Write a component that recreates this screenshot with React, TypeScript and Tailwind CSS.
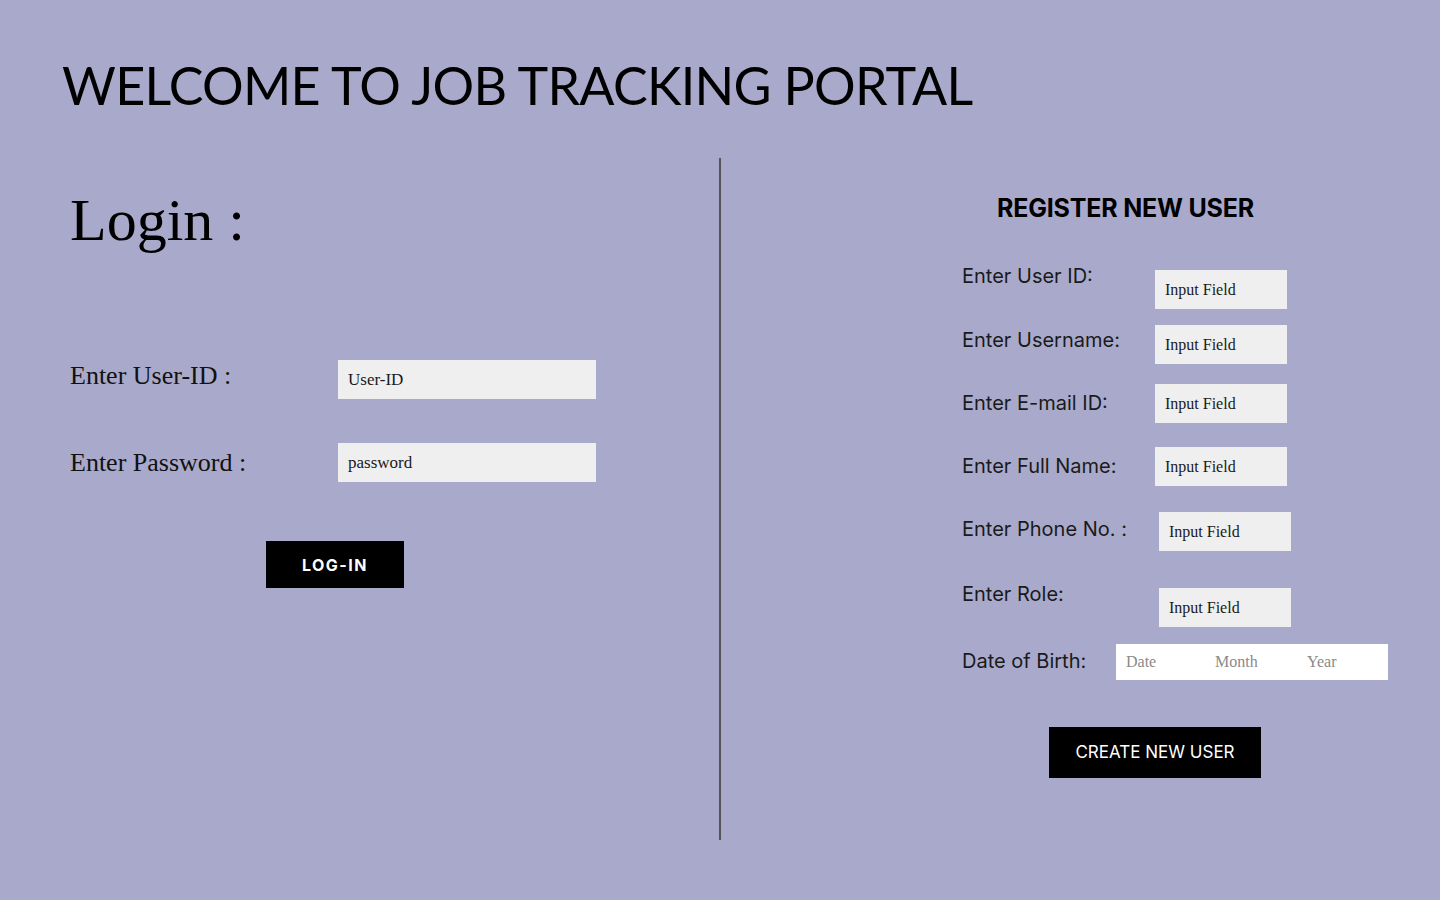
import { useState } from 'react';

type RegRow = {
  label: string;
  row: string;
  lab: string;
  inp: string;
};

const serif = "font-['Liberation_Serif',serif]";

const regRows: RegRow[] = [
  { label: 'Enter User ID:', row: 'mt-[43px]', lab: 'w-[193px] mt-0', inp: 'mt-[6px]' },
  { label: 'Enter Username:', row: 'mt-[16px]', lab: 'w-[193px] mt-[3px]', inp: 'mt-0' },
  { label: 'Enter E-mail ID:', row: 'mt-[20px]', lab: 'w-[193px] mt-[7px]', inp: 'mt-0' },
  { label: 'Enter Full Name:', row: 'mt-[24px]', lab: 'w-[193px] mt-[7px]', inp: 'mt-0' },
  { label: 'Enter Phone No. :', row: 'mt-[26px]', lab: 'w-[197px] mt-[5px]', inp: 'mt-0' },
  { label: 'Enter Role:', row: 'mt-[31px]', lab: 'w-[197px] mt-0', inp: 'mt-[6px]' },
];

function LoginPanel() {
  const [userId, setUserId] = useState('');
  const [password, setPassword] = useState('');

  return (
    <div className="w-[719px] pl-[70px] pt-[32px]">
      <h2 className={`${serif} text-[60px] leading-none text-black`}>Login :</h2>

      <div className="mt-[110px] flex h-[39px] items-center">
        <label className={`${serif} mb-[8px] w-[268px] text-[26px] leading-[39px] text-[#111]`}>
          Enter User-ID :
        </label>
        <input
          value={userId}
          onChange={(e) => setUserId(e.target.value)}
          placeholder="User-ID"
          className={`${serif} h-[39px] w-[258px] bg-[#efefef] pl-[10px] text-[17px] text-[#111] outline-none placeholder:text-[#1a1a1a]`}
        />
      </div>

      <div className="mt-[44px] flex h-[39px] items-center">
        <label className={`${serif} w-[268px] text-[26px] leading-[39px] text-[#111]`}>
          Enter Password :
        </label>
        <input
          type="password"
          value={password}
          onChange={(e) => setPassword(e.target.value)}
          placeholder="password"
          className={`${serif} h-[39px] w-[258px] bg-[#efefef] pl-[10px] text-[17px] text-[#111] outline-none placeholder:text-[#1a1a1a]`}
        />
      </div>

      <button className="ml-[196px] mt-[59px] flex h-[47px] w-[138px] items-center justify-center bg-black font-['Inter',sans-serif] text-[16px] font-bold tracking-[1.5px] text-white">
        LOG-IN
      </button>
    </div>
  );
}

function RegisterPanel() {
  return (
    <div className="flex-1 pl-[241px] pt-[38px] font-['Inter',sans-serif]">
      <h2 className="pl-[35px] text-[25px] font-bold leading-none tracking-[-0.2px] text-black">REGISTER NEW USER</h2>

      {regRows.map((r) => (
        <div key={r.label} className={`flex items-start ${r.row}`}>
          <span className={`${r.lab} text-[20px] leading-[24px] text-[#1a1a1a]`}>{r.label}</span>
          <input
            placeholder="Input Field"
            className={`${r.inp} ${serif} h-[39px] w-[132px] bg-[#efefef] pl-[10px] text-[16px] text-[#111] outline-none placeholder:text-[#1a1a1a]`}
          />
        </div>
      ))}

      <div className="mt-[17px] flex items-start">
        <span className="mt-[5px] w-[154px] text-[20px] leading-[24px] text-[#1a1a1a]">Date of Birth:</span>
        <div className={`${serif} flex h-[36px] w-[272px] items-center bg-white pl-[10px] text-[16px] text-[#8a8a8a]`}>
          <span className="w-[89px]">Date</span>
          <span className="w-[92px]">Month</span>
          <span>Year</span>
        </div>
      </div>

      <button className="ml-[87px] mt-[47px] flex h-[51px] w-[212px] items-center justify-center bg-black text-[17px] text-white">
        CREATE NEW USER
      </button>
    </div>
  );
}

export default function App() {
  return (
    <div className="min-h-screen w-full bg-[#a9aacb]">
      <header className="h-[158px] pl-[62px] pt-[59px]">
        <h1 className="font-['Lato',sans-serif] text-[52px] leading-none tracking-[-0.7px] text-black">
          WELCOME TO JOB TRACKING PORTAL
        </h1>
      </header>
      <main className="flex h-[682px]">
        <LoginPanel />
        <div className="w-[2px] bg-[#555]" />
        <RegisterPanel />
      </main>
    </div>
  );
}
